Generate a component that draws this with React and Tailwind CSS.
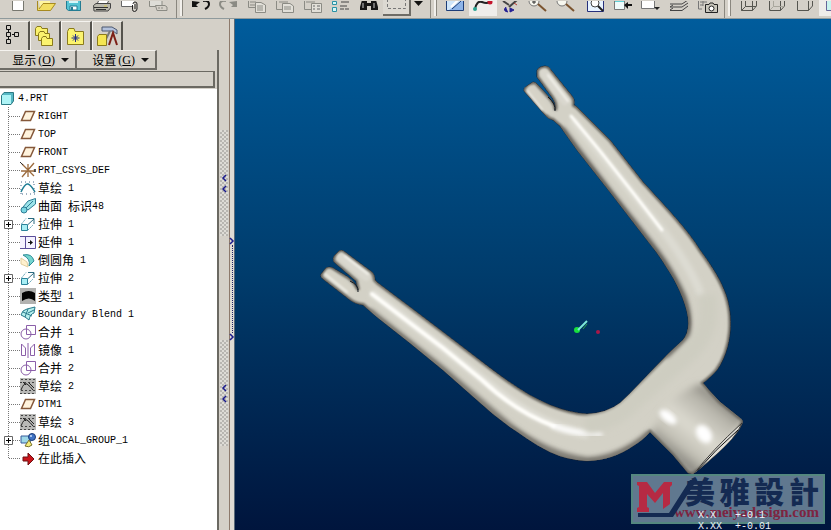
import React from "react";

const TOOL_GROUPS = [
  {
    id: "file",
    pad: "pl-1 pr-px",
    tools: ["New", "Open", "Save", "Print", "Attach", "Send"],
  },
  {
    id: "edit",
    pad: "pl-1",
    tools: ["Undo", "Redo", "Copy", "Paste", "Paste special", "Regenerate", "Find", "Select"],
  },
  {
    id: "view",
    pad: "pl-1",
    tools: ["Sketch", "Curve", "Spin", "Zoom in", "Zoom out", "Refit", "Reorient", "Saved views", "Layers", "Capture"],
  },
  {
    id: "display",
    pad: "pl-1",
    tools: ["Wireframe", "Hidden line", "No hidden", "Shaded"],
  },
];

const grey = "#8b8b84";

const TOOL_ART = {
  New: <path d="M8.500 -1V9.500H19.500V-1" fill="#fff" stroke="#77776f" />,
  Open: (
    <>
      <path d="M5.500 0V9.500H18.500L23.500 2.500H11L7 8" fill="#f3df62" stroke="#a78a20" />
      <path d="M7 0H18V2H11L8 6Z" fill="#fff6a0" />
    </>
  ),
  Save: (
    <>
      <path d="M6.500 -1H20.500V9.500H8.500L6.500 8Z" fill="#55c4d4" stroke="#247c93" />
      <path d="M9 -1H18V2H9Z" fill="#d7f6f8" />
      <path d="M10 5H17V9H10Z" fill="#fff" stroke="#247c93" />
      <path d="M12 6V9" stroke="#247c93" strokeWidth="2" />
    </>
  ),
  Print: (
    <>
      <path d="M9 3L11 -1H21L19 3" fill="#fff" stroke="#555" />
      <path d="M5.500 4.500L8 2.500H22.500V7L20 10H6Z" fill="#bbb9ae" stroke="#444" />
      <path d="M6 6.500H20M8 8.500H18" stroke="#333" />
      <path d="M16 5H19" stroke="#d8c84a" />
    </>
  ),
  Attach: (
    <>
      <path d="M5.500 -1V5.500H16" fill="#fff" stroke="#666" />
      <path d="M6 -1H18V5H6Z" fill="#fff" />
      <path d="M16.500 4V8.500Q16.500 10.500 18.500 10.500T21 8V3Q21 1 19 1T17 3M19 3V8" fill="none" stroke="#222" />
    </>
  ),
  Send: (
    <>
      <path d="M5.500 -1V5.500H18V-1" fill="#deddd7" stroke={grey} />
      <path d="M11.500 4.500H21L23 6V9.500H13Z" fill="#d4d0c8" stroke={grey} />
      <path d="M14 7H20" stroke={grey} strokeDasharray="2 1" />
    </>
  ),
  Undo: (
    <>
      <path d="M5 0V6H11L9 4L13 1Z" fill="#111" />
      <path d="M16 0Q22 -1 22 3Q22 6 18 8" fill="none" stroke="#111" strokeWidth="2" />
    </>
  ),
  Redo: (
    <>
      <path d="M22 0V6H16L18 4L14 1Z" fill={grey} />
      <path d="M11 0Q5 -1 5 3Q5 6 9 8" fill="none" stroke={grey} strokeWidth="2" />
    </>
  ),
  Copy: (
    <>
      <path d="M5.500 -1V6.500H12M7 1H13M7 4H12" fill="none" stroke={grey} />
      <path d="M12.500 1.500H18L22.500 4V11.500H12.500ZM14 5H20M14 7H20M14 9H20" fill="#e2e0d9" stroke={grey} />
    </>
  ),
  Paste: (
    <>
      <path d="M5.500 -1V8.500H12M8 1H17" fill="none" stroke={grey} />
      <path d="M11.500 2.500H19L22.500 5V11.500H11.500ZM13 6H20M13 8H20" fill="#e2e0d9" stroke={grey} />
    </>
  ),
  "Paste special": (
    <>
      <path d="M5.500 -1V8.500H12M7 1H16" fill="none" stroke={grey} />
      <path d="M12.500 2.500H22.500V11.500H12.500Z" fill="#e2e0d9" stroke={grey} />
      <path d="M14 5H16M18 5H21M14 8H16M18 8H21" stroke="#666" />
    </>
  ),
  Regenerate: (
    <>
      <path d="M5.500 .5H9.500V3.500H5.500ZM5.500 6.500H9.500V10.500H5.500Z" fill="#d5f7f7" stroke="#2a91a5" />
      <path d="M14 1H22M13 5H20M13 8H17M18 8H22" stroke="#444" />
    </>
  ),
  Find: (
    <>
      <path d="M7 -1H12V2H16V-1H21L23 6V9H16V5H12V9H5V6Z" fill="#161616" />
      <path d="M8 2V7M19 2V7" stroke="#ccc" />
    </>
  ),
  Select: <path d="M4.500 -1V8.500H22.500V-1" fill="none" stroke="#777" strokeDasharray="3 2" />,
  Sketch: (
    <>
      <path d="M5.500 -1V9.500H22.500V-1" fill="#cfe6fa" stroke="#1c3d78" />
      <path d="M8 9L22 -1V9Z" fill="#8db4e8" />
      <path d="M10 6L17 -1" stroke="#fff" strokeWidth="2" />
      <path d="M11 8L20 0" stroke="#1c3d78" />
    </>
  ),
  Curve: (
    <>
      <path d="M6 8Q8 -1 13 1T20 1" fill="none" stroke="#222" strokeWidth="2" />
      <circle cx="6" cy="8" r="2" fill="#29a391" />
      <circle cx="21" cy="1" r="2.500" fill="#c4152c" />
    </>
  ),
  Spin: (
    <>
      <path d="M6 0L12 4M20 -1L12 6" stroke="#444" strokeWidth="2" />
      <path d="M9 6Q5 10 11 11M13 7L17 9L13 11Z" fill="#252094" stroke="#252094" />
      <path d="M17 2L20 4" stroke="#b43a32" />
    </>
  ),
  "Zoom in": (
    <>
      <circle cx="9" cy="0" r="5" fill="#f7f7ef" stroke="#777" />
      <path d="M7 1H11M9 -1V3" stroke="#333" />
      <path d="M13 3L21 10" stroke="#7b542f" strokeWidth="2" />
    </>
  ),
  "Zoom out": (
    <>
      <circle cx="9" cy="0" r="5" fill="#f7f7ef" stroke="#777" />
      <path d="M13 3L21 10" stroke="#7b542f" strokeWidth="2" />
    </>
  ),
  Refit: (
    <>
      <path d="M6.500 -1V10.500H22.500V-1" fill="#e7f3ff" stroke="#26307c" />
      <circle cx="14" cy="2" r="4" fill="#fff" stroke="#444" />
      <path d="M17 5L22 10" stroke="#222" strokeWidth="2" />
    </>
  ),
  Reorient: (
    <>
      <path d="M5.500 -1V8.500H15.500V-1" fill="#effafa" stroke="#777" />
      <path d="M6 -1H15V1H6Z" fill="#5ed2d8" />
      <path d="M15 4L19 1V3H23V5H19V8Z" fill="#111" />
    </>
  ),
  "Saved views": (
    <>
      <path d="M4.500 -1V7.500H17.500V-1" fill="#fff" stroke="#777" />
      <path d="M17 6H23L20 9Z" fill="#222" />
    </>
  ),
  Layers: (
    <path d="M5 3H17L23 -1M5 6H17L23 2M5 9.500H17L23 5M5 9L8 7M5 6L8 4" fill="none" stroke="#444" />
  ),
  Capture: (
    <>
      <path d="M5.500 -1V8H9M7 1H14M7 4H10M10 -1V5" fill="none" stroke="#777" />
      <path d="M12.500 3.500H16L17 2H20L21 3.500H24.500V11.500H12.500Z" fill="#c9c7bd" stroke="#222" />
      <circle cx="18.500" cy="7.500" r="2.500" fill="#fff" stroke="#222" />
    </>
  ),
  Wireframe: (
    <path d="M6.500 0V9.500H17.500V0M17.500 9.500L21.500 5V-1M10.500 -1V5.500H21M6.500 9.500L10.500 5.500" fill="none" stroke="#55554f" />
  ),
  "Hidden line": (
    <>
      <path d="M6.500 0V9.500H17.500V0M17.500 9.500L21.500 5V-1" fill="none" stroke="#55554f" />
      <path d="M10.500 -1V5.500H21M6.500 9.500L10.500 5.500" fill="none" stroke="#a9a79d" />
    </>
  ),
  "No hidden": <path d="M6.500 0V9.500H17.500V0M17.500 9.500L21.500 5V-1" fill="none" stroke="#55554f" />,
  Shaded: <path d="M7.500 -1V9.500H20V-1Z" fill="#c9f4ee" stroke="#669" />,
};

function ToolButton({ name }) {
  let look = "";
  if (name === "Select") look = "border-r-2 border-b-2 border-[#6e6c66] bg-[#dcd9d2]";
  if (name === "Curve" || name === "Shaded") look = "bg-[#efedea]";
  return (
    <button type="button" aria-label={name} className={`h-4 w-7 shrink-0 overflow-hidden ${look}`}>
      <svg viewBox="0 0 28 14" className="block h-3.5 w-7 max-w-none" aria-hidden="true">
        {TOOL_ART[name]}
      </svg>
    </button>
  );
}

function Toolbar() {
  return (
    <header className="flex h-[19px] shrink-0 overflow-hidden border-b border-[#8f9a9c] bg-[#d4d0c8]">
      {TOOL_GROUPS.map((group, i) => (
        <React.Fragment key={group.id}>
          {i > 0 && (
            <div className="flex shrink-0 gap-[3px] pl-[3px]">
              <span className="h-[18px] w-px bg-[#8a877f]" />
              <span className="h-4 w-[3px] border-r border-[#8a877f] bg-[#f2f0ec]" />
            </div>
          )}
          <div className={`flex shrink-0 ${group.pad}`} role="toolbar" aria-label={group.id}>
            {group.tools.map((t) => (
              <ToolButton key={t} name={t} />
            ))}
            {group.id === "edit" && (
              <button type="button" aria-label="Selection options" className="h-4 w-4">
                <svg viewBox="0 0 16 14" className="block h-3.5 w-4" aria-hidden="true">
                  <path d="M3 0H12L7.500 5Z" fill="#111" />
                </svg>
              </button>
            )}
          </div>
        </React.Fragment>
      ))}
    </header>
  );
}

const TABS = [
  {
    name: "Model tree",
    art: <path d="M6.500 3.500H10.500V7.500H6.500ZM6.500 10.500H10.500V14.500H6.500ZM14.500 10.500H18.500V14.500H14.500ZM6.500 17.500H10.500V21.500H6.500ZM12 12.500H14M8.500 8V10M8.500 15V17" fill="none" stroke="#111" />,
  },
  {
    name: "Folders",
    art: (
      <g fill="#fbf36e" stroke="#8a7a1c">
        <path d="M4.500 6.500L6 4.500H10L11 6.500H16.500V13.500H4.500Z" />
        <path d="M7.500 11.500L9 9.500H13L14 11.500H18.500V18.500H7.500Z" />
        <path d="M10.500 16.500L12 14.500H15L16 16.500H21.500V23.500H10.500Z" />
      </g>
    ),
  },
  {
    name: "Favorites",
    art: (
      <>
        <path d="M5.500 9.500L7 6.500H12L13 9.500H21.500V22.500H5.500Z" fill="#fbf36e" stroke="#8a7a1c" />
        <path d="M13.500 12V20M9.500 16H17.500M11 13.500L16 18.500M16 13.500L11 18.500" stroke="#1e2a8c" />
      </>
    ),
  },
  {
    name: "Connections",
    art: (
      <>
        <path d="M9 5H19L24 8V12L20 9H9Z" fill="#b4c2dc" stroke="#4a566e" />
        <path d="M17 9L13 17" stroke="#777" strokeWidth="2" />
        <path d="M4.500 14.500L6 12.500H13.500V23.500H4.500Z" fill="#f5e552" stroke="#8a7a1c" />
        <path d="M16 23L20 11L24 23" fill="none" stroke="#7c1f16" strokeWidth="2" />
      </>
    ),
  },
];

function NavTabs() {
  return (
    <div role="tablist" className="flex h-[31px] items-end pt-0.5">
      {TABS.map((tab, i) => (
        <button
          key={tab.name}
          type="button"
          role="tab"
          aria-label={tab.name}
          aria-selected={i === 0}
          className={`h-full shrink-0 border-t border-r-2 border-t-[#f5f3ef] border-r-[#55534d] ${
            i === 0 ? "w-[30px]" : "w-[31px] border-l border-l-[#f5f3ef]"
          }`}
        >
          <svg viewBox="0 0 28 28" className="block size-7 max-w-none" aria-hidden="true">
            {tab.art}
          </svg>
        </button>
      ))}
    </div>
  );
}

function MenuButton({ label, hotkey, wide }) {
  return (
    <button
      type="button"
      className={`flex h-5 items-center justify-end gap-1.5 border-t border-r-2 border-b-2 border-t-[#f5f3ef] border-r-[#6e6c66] border-b-[#6e6c66] pr-1.5 ${
        wide ? "w-20" : "w-[77px]"
      }`}
    >
      <span className="flex items-center">
        <span className="text-[12px] leading-4">{label}</span>
        <span className="pl-0.5 font-['Liberation_Serif','Noto_Sans_CJK_SC',serif] text-[12px] leading-4">
          (<u>{hotkey}</u>)
        </span>
      </span>
      <svg viewBox="0 0 8 4" className="h-1 w-2" aria-hidden="true">
        <path d="M0 0H8L4 4Z" fill="#111" />
      </svg>
    </button>
  );
}

const plane = <path d="M5.500 3.500H14.500L10.500 12.500H1.500Z" fill="#fff3dd" stroke="#85583a" strokeWidth="1.500" />;
const extrude = (
  <>
    <path d="M1.500 8.500H7.500V14.500H1.500Z" fill="#a8eef4" stroke="#2b8299" />
    <path d="M1.500 8L6 2.500M8 14L13 9" stroke="#5fa3b5" strokeDasharray="2 1" />
    <path d="M8 2.500H14V8M14 3L8 8.500" fill="none" stroke="#2b6b80" />
  </>
);
const merge = (
  <>
    <circle cx="6" cy="10" r="5" fill="#fff" stroke="#8b5fa9" />
    <path d="M6.500 1.500H15.500V10.500H6.500Z" fill="#fff" stroke="#8b5fa9" />
    <path d="M6 5A5 5 0 0 1 11 10" fill="none" stroke="#8b5fa9" />
  </>
);
const hiddenSketch = (
  <>
    <path d="M0 0H16V16H0Z" fill="#b8b8b6" />
    <path d="M1 1.500H15M0 4.500H16M1 12.500H15M0 15.500H16" stroke="#444" strokeDasharray="2 2" />
    <path d="M1 12Q4 4 7 6T13 12M3 4L6 7M9 5L14 10" fill="none" stroke="#222" />
  </>
);

const NODE_ART = {
  plane,
  extrude,
  merge,
  hiddenSketch,
  csys: (
    <>
      <path d="M2 2L14 14M14 1L2 15M8 2V15M1 9H15" stroke="#9c6b3d" strokeWidth="1.300" />
      <path d="M0 0L3 3M14 7L16 10M16 7L14 10" stroke="#333" />
    </>
  ),
  sketch: (
    <>
      <path d="M1 2H15M2 14H15M1 5V14M14 4V14" stroke="#468" strokeDasharray="1 3" />
      <path d="M1 12Q5 3 8 4T15 12" fill="none" stroke="#1f7d95" strokeWidth="1.500" />
    </>
  ),
  surface: (
    <>
      <path d="M3 9L8 3L15.500 .5V6L8 12Z" fill="#9ce4ea" stroke="#2f7d95" />
      <path d="M5 11L13 3" stroke="#2f7d95" />
      <circle cx="4" cy="12" r="3" fill="#7bd6e2" stroke="#2f7d95" />
    </>
  ),
  extend: (
    <>
      <path d="M0 2.500H15.500V14.500H0M5.500 3V14" fill="#f4f1ff" stroke="#5a4d9a" />
      <path d="M8 8.500H12" stroke="#111" />
      <path d="M10 6L13 8.500L10 11Z" fill="#111" />
    </>
  ),
  round: (
    <>
      <path d="M1 6L7 10L8 15L1 12Z" fill="#fff1cf" stroke="#e2cf9f" />
      <path d="M3 3Q12 1 14 9L9 14Q11 7 3 3Z" fill="#75d5cf" stroke="#2f8d98" />
    </>
  ),
  style: (
    <>
      <path d="M0 0H16V16H0Z" fill="#b2b2b0" />
      <path d="M2 5Q9 1 15 5V13Q9 8 2 13Z" fill="#050505" />
    </>
  ),
  blend: (
    <>
      <path d="M1 9Q2 4 7 3L15 1L14 7Q10 8 9 14L5 11Z" fill="#b8f0ee" stroke="#25788a" />
      <path d="M3 6L12 10M8 3L5 11M14 4L8 7" stroke="#25788a" fill="none" />
    </>
  ),
  mirror: (
    <path d="M8 1V16M1.500 2V13.500H5.500V6ZM14.500 2V13.500H10.500V6Z" fill="#fff" stroke="#8b5fa9" />
  ),
  group: (
    <>
      <path d="M1 4H9L11 9L7 11H1Z" fill="#9ed8e8" stroke="#365d9c" />
      <circle cx="12" cy="5" r="3.500" fill="#3f73c5" stroke="#1c3d78" />
      <circle cx="11" cy="4" r="1" fill="#cfe0f8" />
      <path d="M5 14L9 8L12 13Q9 16 5 14Z" fill="#f5ed7d" stroke="#77702a" />
    </>
  ),
  insert: <path d="M3 7H8V3L14 9L8 15V11H3Z" fill="#c9151b" stroke="#6e1013" />,
};

const NODES = [
  { label: "RIGHT", icon: "plane" },
  { label: "TOP", icon: "plane" },
  { label: "FRONT", icon: "plane" },
  { label: "PRT_CSYS_DEF", icon: "csys" },
  { label: "草绘 1", icon: "sketch" },
  { label: "曲面 标识48", icon: "surface" },
  { label: "拉伸 1", icon: "extrude", children: true },
  { label: "延伸 1", icon: "extend" },
  { label: "倒圆角 1", icon: "round" },
  { label: "拉伸 2", icon: "extrude", children: true },
  { label: "类型 1", icon: "style" },
  { label: "Boundary Blend 1", icon: "blend" },
  { label: "合并 1", icon: "merge" },
  { label: "镜像 1", icon: "mirror" },
  { label: "合并 2", icon: "merge" },
  { label: "草绘 2", icon: "hiddenSketch" },
  { label: "DTM1", icon: "plane" },
  { label: "草绘 3", icon: "hiddenSketch" },
  { label: "组LOCAL_GROUP_1", icon: "group", children: true },
  { label: "在此插入", icon: "insert" },
];

/* Chinese runs are set at 12px, Latin runs in a half-width mono face. */
function Label({ text }) {
  const runs = text.match(/[\u4e00-\u9fff]+|[^\u4e00-\u9fff]+/g);
  return (
    <span className="flex items-center whitespace-pre text-black">
      {runs.map((run, i) =>
        /[\u4e00-\u9fff]/.test(run) ? (
          <span key={i} className="text-[12px] leading-[18px]">{run}</span>
        ) : (
          <span key={i} className="pt-px font-['Liberation_Mono',monospace] text-[10px] leading-[18px]">{run}</span>
        )
      )}
    </span>
  );
}

function TreeNode({ node, last }) {
  return (
    <li className="flex h-[18px] items-center">
      <svg viewBox="0 0 20 18" className="h-[18px] w-5 shrink-0" aria-hidden="true">
        <path d={last ? "M8.500 0V9" : "M8.500 0V18"} stroke="#777" strokeDasharray="1 1" />
        <path d="M9 9.500H20" stroke="#777" strokeDasharray="1 1" />
        {node.children && (
          <>
            <path d="M4.500 5.500H12.500V13.500H4.500Z" fill="#fff" stroke="#666" />
            <path d="M6 9.500H11M8.500 7V12" stroke="#000" />
          </>
        )}
      </svg>
      <svg viewBox="0 0 16 16" className="mr-0.5 size-4 shrink-0" aria-hidden="true">
        {NODE_ART[node.icon]}
      </svg>
      <Label text={node.label} />
    </li>
  );
}

function ModelTree() {
  return (
    <div className="flex-1 bg-white">
      <div className="flex h-[18px] items-center gap-1">
        <svg viewBox="0 0 14 14" className="size-3.5" aria-hidden="true">
          <path d="M1.500 4.500L4 1.500H13.500V10L11 13.500H1.500Z" fill="#55b8c4" stroke="#2c7a85" />
          <path d="M2 4H11V13H2Z" fill="#aef4f6" />
        </svg>
        <Label text="4.PRT" />
      </div>
      <ul>
        {NODES.map((node, i) => (
          <TreeNode key={i} node={node} last={i === NODES.length - 1} />
        ))}
      </ul>
    </div>
  );
}

function Navigator() {
  return (
    <aside className="flex w-[219px] shrink-0 flex-col">
      <NavTabs />
      <div className="flex flex-1 flex-col border-r-2 border-[#6b6962]">
        <div className="flex h-[21px]">
          <MenuButton label="显示" hotkey="O" />
          <MenuButton label="设置" hotkey="G" wide />
        </div>
        <div className="mr-0.5 mb-px h-[17px] border-t border-r-2 border-b-2 border-[#6b6962] bg-[#d4d0c8]" />
        <ModelTree />
      </div>
    </aside>
  );
}

function Chevrons({ dir, count }) {
  const d = dir === "left" ? "M5 1L2 4L5 7" : "M1 1L4 4L1 7";
  return Array.from({ length: count }, (_, i) => (
    <svg key={i} viewBox="0 0 6 8" className="h-2 w-1.5 shrink-0" aria-hidden="true">
      <path d={d} fill="none" stroke="#1a1a8c" strokeWidth="1.500" />
    </svg>
  ));
}

function Grip() {
  return (
    <button
      type="button"
      aria-label="Collapse navigator"
      className="flex h-[106px] w-2 flex-col items-center justify-center gap-[3px] bg-[conic-gradient(#b8b6b1_25%,#dedcd6_25%_50%,#b8b6b1_50%_75%,#dedcd6_75%)] bg-[length:4px_4px]"
    >
      <Chevrons dir="left" count={2} />
    </button>
  );
}

function Sash() {
  return (
    <div className="flex w-4 shrink-0">
      <div className="flex w-2.5 flex-col items-center gap-[104px] pt-[111px]">
        <Grip />
        <Grip />
      </div>
      <div className="flex w-1.5 flex-col items-center border-r border-l border-r-[#5a6a78] border-l-[#8d7a6c] bg-[#dedbd4] pt-[218px]">
        <Chevrons dir="right" count={1} />
        <span className="h-[88px] border-l border-dotted border-[#222266]" />
        <Chevrons dir="right" count={1} />
      </div>
    </div>
  );
}

const BODY =
  "M537 73Q536 67 545 66Q549 66 551 70L572 96Q575 99 574 105L577 107L610 140L643 182C665 206 688 230 700 250C714 269 721 281 726 295C733 315 733 347 717 370Q712 376 703 383Q710 392 720 402L740 418Q744 420 742 424Q738 434 722 449Q704 466 693 474L688 473L673 455L655 437L650 432Q643 440 633 446Q613 460 587 461Q567 460 550 452C532 443 520 433 510 427Q492 414 477 400L443 370L410 343L377 317L363 305Q355 304 350 300L323 279Q319 276 322 273L326 268Q329 266 333 268L348 277Q356 283 358 290L356 281L334 262Q332 258 335 255L339 251Q342 249 345 252L372 272Q375 275 375 280L378 283L410 307L443 332L477 358C502 377 525 395 550 405Q570 413 587 414Q607 413 620 403Q630 394 640 383L667 355L683 340Q690 332 688 317C686 302 676 281 667 268C661 258 655 250 647 240L610 192L577 150L560 126L553 120Q548 119 545 115L524 91Q523 88 527 86L533 82Q536 82 538 85L549 97Q557 106 555 110Q557 104 551 96L537 77Z";

function ForkModel() {
  return (
    <svg
      viewBox="235 19 596 511"
      preserveAspectRatio="xMidYMin meet"
      className="block h-auto w-full"
      role="img"
      aria-label="Shaded fork part"
    >
      <defs>
        <clipPath id="body"><path d={BODY} /></clipPath>
        <filter id="soft1" x="-20%" y="-20%" width="140%" height="140%"><feGaussianBlur stdDeviation="1" /></filter>
        <filter id="soft2" x="-20%" y="-20%" width="140%" height="140%"><feGaussianBlur stdDeviation="2" /></filter>
        <filter id="soft3" x="-20%" y="-20%" width="140%" height="140%"><feGaussianBlur stdDeviation="3.500" /></filter>
        <linearGradient id="stem" gradientUnits="userSpaceOnUse" x1="718" y1="392" x2="668" y2="455">
          <stop offset="0" stopColor="#77756e" />
          <stop offset=".2" stopColor="#b5b3a9" />
          <stop offset=".55" stopColor="#dcdad0" />
          <stop offset=".8" stopColor="#c2c0b5" />
          <stop offset="1" stopColor="#7b7973" />
        </linearGradient>
      </defs>
      <path d={BODY} fill="#d3d1c6" stroke="#1c2532" strokeWidth="1" />
      <g clipPath="url(#body)">
        <path d="M650 436Q660 412 672 400Q690 386 702 384L745 418L695 478Z" fill="url(#stem)" filter="url(#soft3)" />
        <path d={BODY} fill="none" stroke="#6b6861" strokeWidth="4" filter="url(#soft1)" />
        <g fill="none" strokeLinecap="round" filter="url(#soft2)">
          <path d="M563 130L610 192L650 242Q672 270 684 297Q691 318 688 335L668 356" stroke="#68655f" strokeWidth="5" />
          <path d="M371 312L443 369L510 426Q548 455 587 460Q620 458 648 434" stroke="#827f77" strokeWidth="6" />
          <path d="M574 122L610 166L656 222Q688 262 700 292" stroke="#dddcd3" strokeWidth="8" />
          <path d="M374 294L443 348L500 393Q540 425 585 434" stroke="#e2e1d9" strokeWidth="8" />
        </g>
        <g fill="none" stroke="#fffefa" strokeLinecap="round" filter="url(#soft1)">
          <path d="M571 116L600 151L634 194L662 230" strokeWidth="3" />
          <path d="M372 294L410 323L443 348L482 380Q516 412 554 426" strokeWidth="4" />
        </g>
        <path d="M554 426Q575 434 600 434" fill="none" stroke="#fff" strokeWidth="5" strokeLinecap="round" filter="url(#soft2)" />
        <path d="M707 295Q713 330 690 352L625 409Q608 423 585 425" fill="none" stroke="#cecdc1" strokeWidth="18" filter="url(#soft3)" />
        <g fill="none" strokeLinecap="round" filter="url(#soft1)">
          <path d="M544 73L565 101M341 257L366 277" stroke="#dad8cf" strokeWidth="8" />
          <path d="M531 89L547 110M329 273L352 292" stroke="#d6d3c7" strokeWidth="7" />
          <path d="M548 75L568 101M345 256L368 274" stroke="#f6f5ef" strokeWidth="2" />
          <path d="M527 91L542 110M325 274L347 292" stroke="#f3f2ea" strokeWidth="2" />
        </g>
        <ellipse cx="668" cy="417" rx="10" ry="5" fill="#fff" transform="rotate(38 668 417)" filter="url(#soft2)" />
        <ellipse cx="704" cy="434" rx="10" ry="7" fill="#fff" transform="rotate(55 704 434)" filter="url(#soft2)" />
        <path d="M694 474Q712 450 742 423Q736 438 716 455Z" fill="#deddd7" stroke="#3b3a38" />
        <path d="M697 471Q715 450 738 430" fill="none" stroke="#111" />
      </g>
      <path d="M548 97Q556 104 555 111M350 281Q359 285 358 292" fill="none" stroke="#10161e" />
      <circle cx="577" cy="330" r="3" fill="#18e03c" />
      <path d="M578 330L587 321" stroke="#7ce8d8" strokeWidth="2" />
      <path d="M583 329L587 324" stroke="#26a048" />
      <circle cx="598" cy="332" r="2" fill="#a81848" />
    </svg>
  );
}

function Watermark() {
  return (
    <div className="absolute right-1.5 bottom-1.5 h-[50px] w-[194px] border-2 border-[#54877f] bg-[#60788f]">
      <svg viewBox="0 0 60 46" className="absolute top-0 left-1 h-[46px] w-[60px]" aria-hidden="true">
        <path d="M0 6H10L18 17L27 6H35V9L33 11V28L26 33V17L18 27L10 18V31L12 32V36H0V32L2 31V10L0 9Z" fill="#b62a43" />
        <path d="M1 37H32L53 4H60L36 41H1Z" fill="#142a52" />
      </svg>
      <div className="flex flex-col items-end pt-px pr-1">
        <span className="flex w-[134px] justify-between font-['Noto_Sans_CJK_TC','Noto_Sans_CJK_SC',sans-serif] text-[30px] leading-[27px] font-black text-[#142a52]">
          {[..."美雅設計"].map((glyph) => (
            <span key={glyph}>{glyph}</span>
          ))}
        </span>
        <a href="#site" className="font-['Liberation_Serif',serif] text-[15px] leading-4 font-bold text-[#7d2440]">
          www.meiyadesign.com
        </a>
      </div>
    </div>
  );
}

function Tolerances() {
  return (
    <div className="absolute right-[60px] -bottom-0.5 grid grid-cols-[37px_36px] font-['Liberation_Mono',monospace] text-[10px] leading-[11px] text-[#eef4fa]">
      <span>X.X</span>
      <span>+-0.1</span>
      <span>X.XX</span>
      <span>+-0.01</span>
    </div>
  );
}

export default function App() {
  return (
    <div className="flex min-h-screen flex-col overflow-hidden bg-[#d4d0c8] font-['Noto_Sans_CJK_SC',sans-serif] text-black">
      <Toolbar />
      <div className="flex flex-1">
        <Navigator />
        <Sash />
        <main className="relative min-w-0 flex-1 overflow-hidden bg-linear-to-b from-[#005c9c] via-[#003c6c] to-[#00153d]">
          <ForkModel />
          <Watermark />
          <Tolerances />
        </main>
      </div>
    </div>
  );
}
